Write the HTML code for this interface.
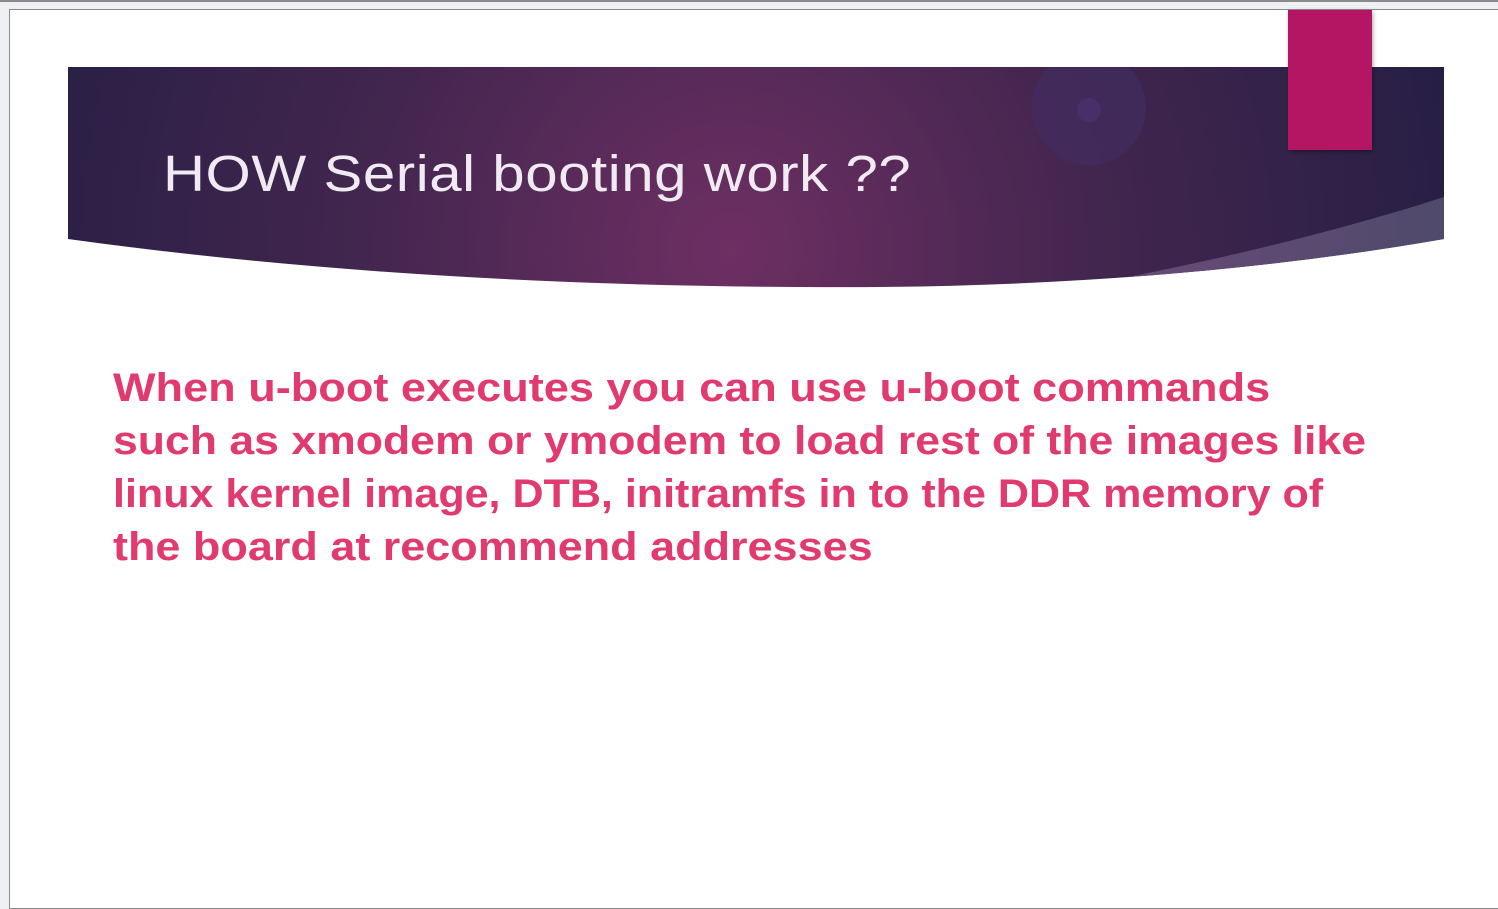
<!DOCTYPE html>
<html><head><style>
html,body{margin:0;padding:0;width:1498px;height:791px;overflow:hidden;background:#eef0f4;}
.top{position:absolute;left:0;top:0;width:1498px;height:2px;background:#8a8a8a;}
.slide{position:absolute;left:9px;top:9px;width:1500px;height:900px;background:#fff;border:1px solid #8a8a8a;box-sizing:border-box;}
.title{position:absolute;left:163px;top:144px;font-family:"Liberation Sans",sans-serif;font-size:51px;color:#f0eaf2;white-space:nowrap;letter-spacing:0.5px;transform:scaleX(1.14);transform-origin:0 0;}
.body{position:absolute;left:113px;top:362px;font-family:"Liberation Sans",sans-serif;font-weight:bold;font-size:40px;line-height:53px;color:#e03a6e;white-space:nowrap;}
.body div{transform-origin:0 0;}
</style></head><body>
<div class="top"></div>
<div class="slide"></div>
<svg style="position:absolute;left:0;top:0" width="1498" height="791">
<defs>
<radialGradient id="g" cx="730" cy="250" r="800" gradientUnits="userSpaceOnUse">
<stop offset="0" stop-color="#6e2f63"/><stop offset="0.45" stop-color="#43264f"/><stop offset="1" stop-color="#221d43"/>
</radialGradient>
<linearGradient id="s" x1="1100" y1="0" x2="1444" y2="0" gradientUnits="userSpaceOnUse">
<stop offset="0" stop-color="#6a4a78"/><stop offset="1" stop-color="#4f4a6c"/>
</linearGradient>
<clipPath id="c"><path d="M68 67 H1444 V239 Q1150 290 800 287 Q400 285 68 239 Z"/></clipPath>
<filter id="sh"><feDropShadow dx="1" dy="2" stdDeviation="2" flood-opacity="0.35"/></filter>
</defs>
<path d="M68 67 H1444 V239 Q1150 290 800 287 Q400 285 68 239 Z" fill="url(#g)"/>
<g clip-path="url(#c)">
<path d="M1444 197 V260 L1060 290 Q1280 250 1444 197 Z" fill="url(#s)"/>
<circle cx="1089" cy="108" r="57" fill="#43306a" opacity="0.45"/>
<circle cx="1089" cy="110" r="12" fill="#4d3373" opacity="0.6"/>
</g>
<rect x="1288" y="10" width="84" height="140" fill="#b41463" filter="url(#sh)"/>
</svg>
<div class="title">HOW Serial booting work ??</div>
<div class="body">
<div style="transform:scaleX(1.127)">When u-boot executes you can use u-boot commands</div>
<div style="transform:scaleX(1.114)">such as xmodem or ymodem to load rest of the images like</div>
<div style="transform:scaleX(1.076)">linux kernel image, DTB, initramfs in to the DDR memory of</div>
<div style="transform:scaleX(1.124)">the board at recommend addresses</div>
</div>
</body></html>
